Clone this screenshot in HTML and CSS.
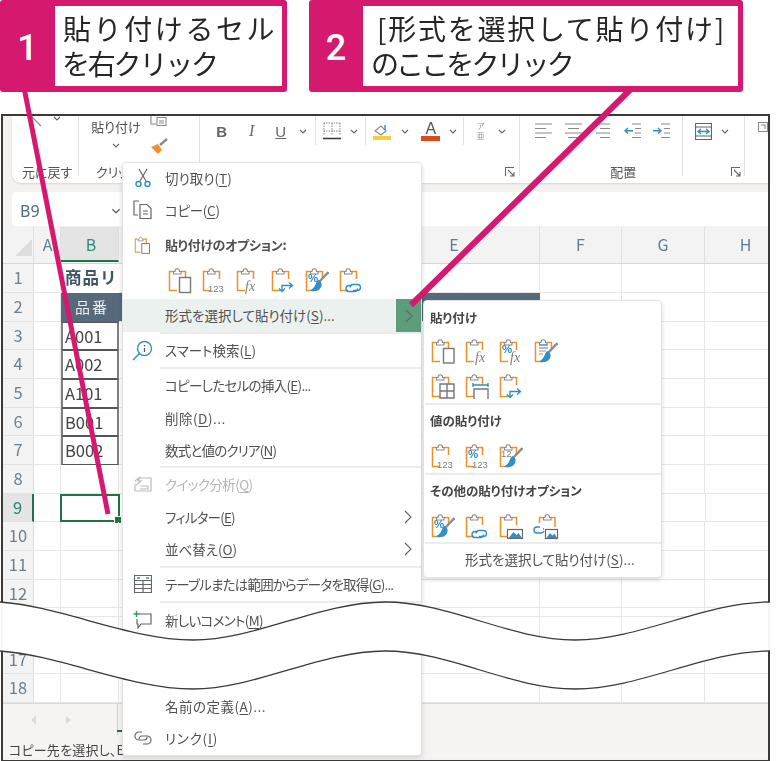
FILE: index.html
```html
<!DOCTYPE html>
<html lang="ja">
<head>
<meta charset="utf-8">
<title>形式を選択して貼り付け</title>
<link rel="stylesheet" href="styles.css">
</head>
<body>
<svg class="defs" width="0" height="0" aria-hidden="true">
  <symbol id="chev" viewBox="0 0 8 5"><path class="s-g" d="M1 1l3 3 3-3"/></symbol>
  <symbol id="more" viewBox="0 0 8 14"><path class="s-g" d="M1 1l6 6-6 6"/></symbol>
  <symbol id="launch" viewBox="0 0 10 10"><path class="s-g" d="M.5 9V.5H9M3 3l6 6M9 5v4H5"/></symbol>
  <symbol id="clip" viewBox="0 0 24 26">
    <path class="s-o" d="M5 4.500H1.500V23.500H9M13 4.500H17.500V12"/>
    <path class="s-c" d="M5.500 7V4.500H7C7 .8 11.500 .8 11.500 4.500H13V7Z"/>
  </symbol>
  <symbol id="brush" viewBox="0 0 24 26">
    <path class="s-stem" d="M23.500 5L14.500 14.500"/>
    <path class="f-b" d="M14 13C10 14 12 20 5 23.500C10 25.500 17.500 23.500 16.500 16Z"/>
  </symbol>
  <symbol id="chain" viewBox="0 0 24 26">
    <path class="s-b" d="M13 18.500h-3a3 3 0 0 0 0 6h5.500a3 3 0 0 0 3-3M14 23.500h4.500a3 3 0 0 0 0-6H14a3 3 0 0 0-3 3"/>
  </symbol>
  <symbol id="swap" viewBox="0 0 24 26">
    <path class="s-b" d="M8 21.500l3 3 3-3M11 24v-5.500h9.500M18 15.500l3.500 3-3.500 3"/>
  </symbol>
  <symbol id="pic" viewBox="0 0 24 26">
    <rect class="s-d" x="8.500" y="16.500" width="15" height="9"/>
    <path class="f-b" d="M9.500 25l5-6 3 3 2-2 3.500 5Z"/>
  </symbol>
</svg>

<div class="callouts">
  <div class="callout c1">
    <div class="num">1</div>
    <div class="say"><span class="l1">貼り付けるセル</span><span class="l2">を右クリック</span></div>
  </div>
  <div class="callout c2">
    <div class="num">2</div>
    <div class="say"><span class="l1 br">[形式を選択して貼り付け]</span><span class="l2">のここをクリック</span></div>
  </div>
</div>

<div class="excel">
  <div class="ribbon">
    <div class="grp g1">
      <div class="g1-top">
        <svg class="undo" width="12" height="11" viewBox="0 0 12 11"><path class="s-l" d="M1 0l10 10"/></svg>
        <svg class="ch" width="8" height="5"><use href="#chev"/></svg>
      </div>
      <div class="lab">元に戻す</div>
    </div>
    <div class="grp g2">
      <div class="g2-top">
        <div class="pastecol"><span class="ptxt">貼り付け</span><svg class="ch" width="8" height="5"><use href="#chev"/></svg></div>
        <div class="smallcol">
          <svg width="18" height="11" viewBox="0 0 18 11"><path class="s-l" d="M1 0v8h5M7 1.500h9v8H7zM9 5h5M9 7h5"/></svg>
          <svg width="19" height="17" viewBox="0 0 19 17"><path class="f-o" d="M1 9l7-3 4 6-4 4z"/><path class="s-stem" d="M10 7l7-6"/></svg>
        </div>
      </div>
      <div class="lab lab-clip">クリッ</div>
    </div>
    <div class="grp g3">
      <div class="tools">
        <span class="t w30 fb">B</span>
        <span class="t w30 fi">I</span>
        <span class="t w28 fu">U</span>
        <span class="t w16"><svg class="ch" width="8" height="5"><use href="#chev"/></svg></span>
        <span class="t w10"><i class="vsep"></i></span>
        <span class="t w22"><svg width="18" height="18" viewBox="0 0 18 18"><path class="s-dot" d="M.5 1h17M.5 9h17M1 1v12M9 1v12M17 1v12"/><path class="s-k" d="M0 16.500h18"/></svg></span>
        <span class="t w22"><svg class="ch" width="8" height="5"><use href="#chev"/></svg></span>
        <span class="t w2"><i class="vsep"></i></span>
        <span class="t w30"><svg width="18" height="17" viewBox="0 0 18 17"><path class="s-l" d="M2 8l6-5 5 5-5 4z"/><path class="s-b" d="M12 7V2"/><rect class="f-y" y="13" width="18" height="4"/></svg></span>
        <span class="t w16"><svg class="ch" width="8" height="5"><use href="#chev"/></svg></span>
        <span class="t w36 col-a"><span class="aa">A</span><i class="redbar"></i></span>
        <span class="t w8"><svg class="ch" width="8" height="5"><use href="#chev"/></svg></span>
        <span class="t w14"><i class="vsep"></i></span>
        <span class="t w20"><span class="phon">ア<br>亜</span></span>
        <span class="t w22"><svg class="ch" width="8" height="5"><use href="#chev"/></svg></span>
      </div>
      <div class="lab lab-end"><svg width="10" height="10"><use href="#launch"/></svg></div>
    </div>
    <div class="grp g4">
      <div class="tools">
        <span class="t w30"><svg width="17" height="16" viewBox="0 0 17 16"><path class="s-l" d="M0 1h17M0 5.500h11M0 10h17M0 14.500h11"/></svg></span>
        <span class="t w30"><svg width="17" height="16" viewBox="0 0 17 16"><path class="s-l" d="M0 1h17M3 5.500h11M0 10h17M3 14.500h11"/></svg></span>
        <span class="t w30"><svg width="14" height="16" viewBox="0 0 14 16"><path class="s-l" d="M0 1h14M4 5.500h10M0 10h14M4 14.500h10"/></svg></span>
        <span class="t w28"><svg width="17" height="16" viewBox="0 0 17 16"><path class="s-l" d="M8 1h9M11 5.500h6M11 10h6M8 14.500h9"/><path class="s-b" d="M9 7.700H1M4 5L1 7.700l3 2.800"/></svg></span>
        <span class="t w30"><svg width="17" height="16" viewBox="0 0 17 16"><path class="s-l" d="M8 1h9M11 5.500h6M11 10h6M8 14.500h9"/><path class="s-b" d="M0 7.700h8M5 5l3 2.700-3 2.800"/></svg></span>
        <span class="t w12"><i class="vsep tall"></i></span>
        <span class="t w30"><svg width="17" height="17" viewBox="0 0 17 17"><path class="s-d" d="M.5.500h16v16H.5zM.500 4h16M.500 13h16"/><path class="s-b" d="M3 8.500h11M6 6L3 8.500 6 11M11 6l3 2.500-3 2.500"/></svg></span>
        <span class="t w14"><svg class="ch" width="8" height="5"><use href="#chev"/></svg></span>
      </div>
      <div class="lab lab-mid">配置<svg class="launch-r" width="10" height="10"><use href="#launch"/></svg></div>
    </div>
    <div class="grp g5">
      <svg class="edge" width="10" height="10" viewBox="0 0 10 10"><path class="s-l" d="M.5.500h9v9h-9zM3 3h4v4"/></svg>
    </div>
  </div>

  <div class="formula">
    <div class="namebox"><span>B9</span><svg width="10" height="6" viewBox="0 0 8 5"><use href="#chev"/></svg></div>
    <div class="fx-input"></div>
  </div>

  <div class="sheet">
    <div class="colhead">
      <div class="corner"><i class="tri"></i></div>
      <div class="ch-a">A</div>
      <div class="ch-b">B</div>
      <div class="ch-c"></div>
      <div class="ch-d"></div>
      <div class="ch-e">E</div>
      <div class="ch-f">F</div>
      <div class="ch-g">G</div>
      <div class="ch-h">H</div>
    </div>
    <div class="row"><div class="rh">1</div><div class="ca"></div><div class="cb title">商品リ</div><div class="rest"></div></div>
    <div class="row"><div class="rh">2</div><div class="ca"></div><div class="cb thead">品番</div><div class="rest"><i class="band"></i></div></div>
    <div class="row"><div class="rh">3</div><div class="ca"></div><div class="cb td">A001</div><div class="rest"></div></div>
    <div class="row"><div class="rh">4</div><div class="ca"></div><div class="cb td">A002</div><div class="rest"></div></div>
    <div class="row"><div class="rh">5</div><div class="ca"></div><div class="cb td">A101</div><div class="rest"></div></div>
    <div class="row"><div class="rh">6</div><div class="ca"></div><div class="cb td">B001</div><div class="rest"></div></div>
    <div class="row"><div class="rh">7</div><div class="ca"></div><div class="cb td">B002</div><div class="rest"></div></div>
    <div class="row"><div class="rh">8</div><div class="ca"></div><div class="cb"></div><div class="rest"></div></div>
    <div class="row"><div class="rh rh-on">9</div><div class="ca"></div><div class="cb sel"></div><div class="rest"></div></div>
    <div class="row"><div class="rh">10</div><div class="ca"></div><div class="cb"></div><div class="rest"></div></div>
    <div class="row"><div class="rh">11</div><div class="ca"></div><div class="cb"></div><div class="rest"></div></div>
    <div class="row"><div class="rh">12</div><div class="ca"></div><div class="cb"></div><div class="rest"></div></div>
    <div class="row short"><div class="rh"></div><div class="ca"></div><div class="cb"></div><div class="rest"></div></div>
    <div class="row"><div class="rh"></div><div class="ca"></div><div class="cb"></div><div class="rest"></div></div>
    <div class="row"><div class="rh">17</div><div class="ca"></div><div class="cb"></div><div class="rest"></div></div>
    <div class="row"><div class="rh">18</div><div class="ca"></div><div class="cb"></div><div class="rest"></div></div>
  </div>

  <div class="tabs">
    <svg width="42" height="10" viewBox="0 0 42 10"><path class="f-lg" d="M6 1L1 5l5 4zM36 1l5 4-5 4z"/></svg>
    <i class="tabline"></i>
    <i class="tabgreen"></i>
  </div>
  <div class="status">コピー先を選択し、E</div>
</div>

<div class="menu">
  <div class="mi h32"><span class="ic"><svg width="16" height="20" viewBox="0 0 16 20"><path class="s-d" d="M4 1l7 12M12 1L5 13"/><circle class="s-b" cx="3.500" cy="16" r="2.500"/><circle class="s-b" cx="12.500" cy="16" r="2.500"/></svg></span>切り取り(<u>T</u>)</div>
  <div class="mi h32 k-3"><span class="ic"><svg width="19" height="19" viewBox="0 0 19 19"><path class="s-d" d="M6 1H1v14h4M7 4.500h7l4 4v10H7zM10 11h5M10 14h5"/></svg></span>コピー(<u>C</u>)</div>
  <div class="mi mh h38 k-3"><span class="ic"><svg width="17" height="18" viewBox="0 0 24 26"><use href="#clip"/><rect class="s-d" x="11" y="11" width="11" height="14"/></svg></span>貼り付けのオプション:</div>
  <div class="pastes p-main">
    <svg class="pi" viewBox="0 0 24 26"><use href="#clip"/><rect class="s-d2" x="11.500" y="10.500" width="11" height="15"/></svg>
    <svg class="pi" viewBox="0 0 24 26"><use href="#clip"/><text class="t123" x="6" y="25">123</text></svg>
    <svg class="pi" viewBox="0 0 24 26"><use href="#clip"/><text class="tfx" x="9" y="24">fx</text></svg>
    <svg class="pi" viewBox="0 0 24 26"><use href="#clip"/><use href="#swap" width="24" height="26"/></svg>
    <svg class="pi" viewBox="0 0 24 26"><use href="#clip"/><text class="tpc" x="3" y="15">%</text><use href="#brush" width="24" height="26"/></svg>
    <svg class="pi" viewBox="0 0 24 26"><use href="#clip"/><use href="#chain" width="24" height="26"/></svg>
  </div>
  <div class="mi hot"><span class="hot-t"><span class="ic"></span>形式を選択して貼り付け(<u>S</u>)...</span><span class="hot-a"><svg width="8" height="14"><use href="#more"/></svg></span></div>
  <i class="sep s1"></i>
  <div class="mi h33"><span class="ic"><svg width="21" height="21" viewBox="0 0 21 21"><circle class="s-b" cx="12.500" cy="8.500" r="7"/><path class="s-b" d="M7.500 13.500L1 20"/><path class="s-k1" d="M12.500 8v4M12.500 5v1.500"/></svg></span>スマート検索(<u>L</u>)</div>
  <i class="sep s1"></i>
  <div class="mi h33 k-7"><span class="ic"></span>コピーしたセルの挿入(<u>E</u>)...</div>
  <div class="mi h32 k5"><span class="ic"></span>削除(<u>D</u>)...</div>
  <div class="mi h32 k-8"><span class="ic"></span>数式と値のクリア(<u>N</u>)</div>
  <i class="sep s1"></i>
  <div class="mi h33 off k-6"><span class="ic"><svg width="18" height="18" viewBox="0 0 18 18"><path class="s-lg" d="M6 3h11v13H1V9M1 6l5-4-2 4 3 0-5 4M6 11h8v3H6"/></svg></span>クイック分析(<u>Q</u>)</div>
  <div class="mi h32 k-8"><span class="ic"></span>フィルター(<u>E</u>)<svg class="arrow" width="8" height="14"><use href="#more"/></svg></div>
  <div class="mi h33"><span class="ic"></span>並べ替え(<u>O</u>)<svg class="arrow" width="8" height="14"><use href="#more"/></svg></div>
  <i class="sep s1"></i>
  <div class="mi h33 k-8"><span class="ic"><svg width="18" height="18" viewBox="0 0 18 18"><path class="s-d" d="M.5.500h17v17H.5zM.5 5.500h17M.5 9.500h17M.5 13.500h17M9 5.500v12"/><path class="s-b" d="M3 3h3M12 3h3"/></svg></span>テーブルまたは範囲からデータを取得(<u>G</u>)...</div>
  <i class="sep s1"></i>
  <div class="mi h34 k-7"><span class="ic"><svg width="19" height="18" viewBox="0 0 19 18"><path class="s-d" d="M6 3h12v10H8l-3 4v-4H4V8"/><path class="s-gr" d="M3.500 0v6M.5 3h6"/></svg></span>新しいコメント(<u>M</u>)</div>
  <div class="gap53"></div>
  <div class="mi h32 k5"><span class="ic"></span>名前の定義(<u>A</u>)...</div>
  <div class="mi h32 k8"><span class="ic"><svg width="18" height="14" viewBox="0 0 18 14"><path class="s-d" d="M8 1H5a4 4 0 0 0 0 8h5a3 3 0 0 0 3-3M9 13h4a4 4 0 0 0 0-8H8a3 3 0 0 0-3 3"/></svg></span>リンク(<u>I</u>)</div>
</div>

<div class="submenu">
  <div class="st t34">貼り付け</div>
  <div class="pastes p-a">
    <svg class="pi" viewBox="0 0 24 26"><use href="#clip"/><rect class="s-d2" x="12.500" y="10.500" width="10.500" height="14.500"/></svg>
    <svg class="pi" viewBox="0 0 24 26"><use href="#clip"/><text class="tfx" x="10" y="24">fx</text></svg>
    <svg class="pi" viewBox="0 0 24 26"><use href="#clip"/><text class="tpc" x="3" y="15">%</text><text class="tfx" x="11" y="24">fx</text></svg>
    <svg class="pi" viewBox="0 0 24 26"><use href="#clip"/><path class="s-lines" d="M5 7h9M5 10h9"/><path class="s-red" d="M5 13h7M5 16h4"/><use href="#brush" width="24" height="26"/></svg>
    <svg class="pi" viewBox="0 0 24 26"><use href="#clip"/><path class="s-d2" d="M9 11h14v14H9zM16 11v14M9 18h14"/></svg>
    <svg class="pi" viewBox="0 0 24 26"><use href="#clip"/><path class="s-b" d="M8 12h15M8 10v4M23 10v4"/><path class="s-d2" d="M9 26V16h14v10"/></svg>
    <svg class="pi" viewBox="0 0 24 26"><use href="#clip"/><use href="#swap" width="24" height="26"/></svg>
  </div>
  <i class="sep s2 m1"></i>
  <div class="st t33">値の貼り付け</div>
  <div class="pastes p-b">
    <svg class="pi" viewBox="0 0 24 26"><use href="#clip"/><text class="t123" x="6" y="25">123</text></svg>
    <svg class="pi" viewBox="0 0 24 26"><use href="#clip"/><text class="tpc" x="3" y="15">%</text><text class="t123" x="7" y="25">123</text></svg>
    <svg class="pi" viewBox="0 0 24 26"><use href="#clip"/><text class="t123" x="2" y="14">12</text><use href="#brush" width="24" height="26"/></svg>
  </div>
  <i class="sep s2 m1"></i>
  <div class="st t33">その他の貼り付けオプション</div>
  <div class="pastes p-b">
    <svg class="pi" viewBox="0 0 24 26"><use href="#clip"/><text class="tpc" x="3" y="15">%</text><use href="#brush" width="24" height="26"/></svg>
    <svg class="pi" viewBox="0 0 24 26"><use href="#clip"/><use href="#chain" width="24" height="26"/></svg>
    <svg class="pi" viewBox="0 0 24 26"><use href="#clip"/><use href="#pic" width="24" height="26"/></svg>
    <svg class="pi" viewBox="0 0 24 26"><path class="s-o" d="M9 4.500H5.500V10M17 4.500H21V14"/><path class="s-c" d="M9.500 7V4.500H11C11 .8 15.500 .8 15.500 4.500H17V7Z"/><path class="s-b" d="M6 14H3a3 3 0 0 0 0 6h4a3 3 0 0 0 3-2M9 16h1"/><rect class="s-d" x="11.500" y="16.500" width="12" height="9"/><path class="f-b" d="M12.500 25l3.500-5 2.500 2.500 2-2 2.500 4.500Z"/></svg>
  </div>
  <i class="sep s2 m2"></i>
  <div class="sub-item">形式を選択して貼り付け(<u>S</u>)...</div>
</div>

<svg class="cut" width="783" height="761" viewBox="0 0 783 761" aria-hidden="true">
  <path class="cut-fill" d="M0 602C60 606 130 640 193 640S320 602 385 602 510 640 575 640 705 602 771 602V651C705 651 640 689 575 689S450 651 385 651 256 689 193 689 60 655 0 651Z"/>
  <path class="cut-line" d="M0 602C60 606 130 640 193 640S320 602 385 602 510 640 575 640 705 602 770 602"/>
  <path class="cut-line" d="M0 651C60 655 130 689 193 689S320 651 385 651 510 689 575 689 705 651 770 651"/>
</svg>

<svg class="leaders" width="783" height="761" viewBox="0 0 783 761" aria-hidden="true">
  <path class="leader l-a" d="M24.500 90L108 514"/>
  <path class="leader l-b" d="M631 89L411 305"/>
</svg>
</body>
</html>
```
FILE: styles.css
```css
* { box-sizing: border-box; }
html, body { margin: 0; padding: 0; }
body {
  position: relative;
  width: 783px;
  height: 761px;
  overflow: hidden;
  background: #fff;
  color: #505050;
  font-family: "Noto Sans CJK JP", "Noto Sans", sans-serif;
  font-feature-settings: "palt";
}
i { display: block; font-style: normal; }
u { text-underline-offset: 2px; }
.defs { position: absolute; }

/* svg paint classes */
svg path, svg rect, svg circle { fill: none; }
.s-g { stroke: #666; stroke-width: 1.1; fill: none; }
.s-o { stroke: #e8912d; stroke-width: 1.5; fill: none; }
.s-c { stroke: #8a8a8a; stroke-width: 1.1; fill: #fff; }
svg .s-stem { stroke: #8b8b8b; stroke-width: 2.4; fill: none; }
svg .f-b { fill: #2f8fc6; }
svg .f-o { fill: #ee8f33; }
svg .f-y { fill: #f2d235; }
svg .f-lg { fill: #d9d9d9; }
.s-b { stroke: #2f8fc6; stroke-width: 1.4; fill: none; }
.s-d { stroke: #666; stroke-width: 1.2; fill: none; }
.s-d2 { stroke: #777; stroke-width: 1.4; fill: #fff; }
svg .s-d2 { fill: #fff; }
.s-l { stroke: #8a8a8a; stroke-width: 1.1; fill: none; }
.s-lg { stroke: #bcbcbc; stroke-width: 1.2; fill: none; }
.s-k { stroke: #333; stroke-width: 1.5; }
.s-k1 { stroke: #555; stroke-width: 1.3; }
.s-gr { stroke: #2f9a63; stroke-width: 1.4; }
.s-dot { stroke: #888; stroke-width: 1; stroke-dasharray: 1.5 1; }
.s-lines { stroke: #2f8fc6; stroke-width: 1.2; }
.s-red { stroke: #e77; stroke-width: 1.2; }
.t123 { font: 9.5px "Liberation Sans", sans-serif; fill: #7d7d7d; }
.tfx { font: italic 14px "Liberation Serif", serif; fill: #7d7d7d; }
.tpc { font: 700 11.5px "Liberation Sans", sans-serif; fill: #2f8fc6; }

/* callouts */
.callouts { display: flex; gap: 22px; height: 92px; }
.callout {
  display: flex;
  height: 92px;
  padding: 6px 5px 6px 0;
  background: #d5196f;
  border-radius: 3px;
}
.c1 { width: 287px; }
.c2 { width: 434px; }
.num {
  width: 54px;
  padding-top: 4px;
  display: flex;
  align-items: center;
  justify-content: center;
  color: #fff;
  font: 500 36px Roboto, sans-serif;
}
.c1 .num { width: 55px; }
.say {
  flex: 1;
  display: flex;
  flex-direction: column;
  justify-content: center;
  padding-left: 9px;
  background: #fff;
  color: #262626;
  font-size: 28px;
  line-height: 35px;
  font-feature-settings: normal;
  filter: blur(.3px);
}
.say .l1 { letter-spacing: 2.600px; white-space: nowrap; margin-left: -1px; }
.say .l1.br { letter-spacing: 1.750px; margin-left: 5px; }
.say .l2 { letter-spacing: -2.200px; white-space: nowrap; margin-left: -2px; }
.c2 .say .l2 { letter-spacing: -2.900px; margin-left: -1px; }

/* window */
.excel {
  margin: 22px 0 0 1px;
  width: 769px;
  height: 647px;
  border: 2px solid #3d3936;
  border-bottom-width: 1px;
  background: #f3f2f1;
  filter: blur(.35px);
}
.ribbon {
  display: flex;
  height: 67px;
  margin-left: 9px;
  background: #fff;
  border-radius: 0 0 0 9px;
  box-shadow: 0 1px 2px rgba(0, 0, 0, .12);
}
.grp {
  height: 60px;
  display: flex;
  flex-direction: column;
  justify-content: space-between;
  border-right: 1px solid #e2e2e2;
}
.g1 { width: 67px; }
.g2 { width: 121px; }
.g3 { width: 321px; }
.g4 { width: 225px; }
.g5 { flex: 1; border: 0; padding: 6px 0 0 13px; }
.lab { font-size: 13px; line-height: 16px; color: #555; white-space: nowrap; margin-bottom: -4px; }
.g1 .lab { padding-left: 10px; }
.g1-top { height: 14px; display: flex; align-items: flex-start; padding-left: 18px; gap: 11px; }
.g2-top { display: flex; height: 44px; }
.pastecol { width: 71px; display: flex; flex-direction: column; align-items: center; gap: 8px; padding: 2px 0 0 3px; }
.ptxt { font-size: 13px; line-height: 17px; }
.smallcol { display: flex; flex-direction: column; gap: 11px; }
.lab-clip { padding-left: 17px; }
.lab-end { display: flex; justify-content: flex-end; padding: 0 4px 3px 0; }
.lab-mid { position: relative; text-align: center; padding-right: 18px; }
.launch-r { position: absolute; right: 3px; top: 3px; }
.tools { display: flex; height: 30px; align-items: center; padding-left: 7px; }
.g4 .tools { padding-left: 8px; }
.t { display: flex; align-items: center; justify-content: center; height: 30px; flex: none; }
.w2 { width: 2px; } .w8 { width: 8px; } .w10 { width: 10px; } .w12 { width: 12px; }
.w14 { width: 14px; } .w16 { width: 16px; } .w20 { width: 20px; } .w22 { width: 22px; }
.w28 { width: 28px; } .w30 { width: 30px; } .w36 { width: 36px; }
.fb, .fi, .fu { font: 700 15px "Liberation Sans", sans-serif; color: #666; }
.fi { font-style: italic; font-weight: 400; font-family: "Liberation Serif", serif; font-size: 16px; }
.fu { font-weight: 400; text-decoration: underline; }
.vsep { width: 1px; height: 28px; background: #e2e2e2; }
.tall { height: 60px; align-self: flex-start; }
.col-a { flex-direction: column; }
.aa { font: 400 16px/15px "Liberation Sans", sans-serif; color: #555; }
.redbar { width: 19px; height: 5px; background: #db4a1b; }
.phon { font-size: 8px; line-height: 10px; color: #999; text-align: center; }

.formula { display: flex; height: 35px; margin-top: 9px; padding-left: 9px; gap: 2px; }
.namebox {
  width: 112px;
  height: 34px;
  display: flex;
  align-items: center;
  justify-content: space-between;
  padding: 4px 3px 0 8px;
  background: #fff;
  border-radius: 4px;
  font: 16px "Noto Sans", sans-serif;
  color: #4f6a80;
}
.fx-input { flex: 1; height: 34px; background: #fff; }

/* sheet */
.sheet { background: #fff; }
.colhead {
  display: flex;
  height: 37.330px;
  background: #f3f3f3;
  border-bottom: 1px solid #d6d6d6;
  font-size: 16px;
  line-height: 35px;
  color: #5f7d92;
  text-align: center;
}
.colhead > div { border-right: 1px solid #e0e0e0; flex: none; }
.corner { width: 31px; padding: 12px 0 0 12px; }
.tri { width: 0; height: 0; border-style: solid; border-width: 0 0 17px 17px; border-color: transparent transparent #dedede transparent; }
.ch-a { width: 27px; padding-left: 1px; }
.ch-b { width: 58px; padding-left: 3px; background: #e4e4e4; border-bottom: 2px solid #217346; height: 35px; color: #2f8a80; }
.ch-c { width: 125px; }
.ch-d { width: 124px; }
.ch-e { width: 172px; padding-left: 1px; }
.ch-f { width: 82px; }
.ch-g { width: 83px; }
.colhead .ch-h { flex: 1; border: 0; padding-left: 18px; }
.row { display: flex; height: 28.670px; font-size: 16.500px; line-height: 27px; color: #444; }
.row.short { height: 8.700px; }
.rh {
  width: 31px;
  flex: none;
  background: #f3f3f3;
  border-right: 1px solid #dcdcdc;
  border-bottom: 1px solid #e2e2e2;
  text-align: center;
  color: #6d7f8c;
}
.rh-on { background: #e4e4e4; border-right: 2px solid #217346; color: #2f7d70; }
.ca, .cb { flex: none; border-right: 1px solid #e6e6e6; border-bottom: 1px solid #e6e6e6; }
.ca { width: 27px; }
.cb { width: 58px; padding-left: 4px; white-space: nowrap; position: relative; }
.title { font-weight: 700; color: #3f5568; letter-spacing: 1px; padding-left: 4px; border: 0; font-feature-settings: normal; }
.thead { background: #566a7c; color: #eee; text-align: center; letter-spacing: 2px; font-size: 15px; border: 0; }
.td { border: 1px solid #444; border-width: 1px 2px 1px 2px; border-color: #555 #808080; padding-left: 2px; line-height: 26px; }
.sel { margin-left: -1px; width: 60px; border: 2px solid #217346; }
.sel::after {
  content: "";
  position: absolute;
  right: -4px;
  bottom: -4px;
  width: 6px;
  height: 6px;
  background: #217346;
  border: 1px solid #fff;
}
.rest {
  flex: 1;
  border-bottom: 1px solid #e6e6e6;
  background-image: linear-gradient(#e6e6e6, #e6e6e6), linear-gradient(#e6e6e6, #e6e6e6), linear-gradient(#e6e6e6, #e6e6e6);
  background-size: 1px 100%;
  background-repeat: no-repeat;
  background-position: 420px 0, 502px 0, 585px 0;
}
.band { width: 421px; height: 28px; background: #566a7c; }

.tabs {
  position: relative;
  height: 38px;
  padding: 11px 0 0 27px;
  background: #f5f4f3;
  border-top: 1px solid #d9d9d9;
}
.tabs svg { display: block; }
.tabline { position: absolute; left: 114px; top: 0; width: 1px; height: 31px; background: #ccc; }
.tabgreen { position: absolute; left: 114px; top: 26px; width: 6px; height: 2px; background: #217346; }
.status { height: 17px; padding: 1px 0 0 6px; background: #f5f4f3; font-size: 13px; line-height: 15px; letter-spacing: .2px; color: #444; white-space: nowrap; }

/* context menus */
.menu, .submenu {
  position: absolute;
  background: #fff;
  border: 1px solid #e3e3e3;
  border-radius: 4px;
  box-shadow: 0 2px 5px rgba(0, 0, 0, .14);
  font-size: 13.500px;
  filter: blur(.3px);
}
.menu { left: 122px; top: 162px; width: 300px; height: 594px; }
.menu > .mi:first-child { margin-top: -1px; }
.submenu { left: 423px; top: 300px; width: 239px; height: 278px; }
.mi { display: flex; align-items: center; white-space: nowrap; padding-bottom: 1px; }
.ic { width: 42px; flex: none; display: flex; justify-content: center; padding-right: 3px; }
.h32 { height: 32px; }
.h33 { height: 33px; }
.h34 { height: 34px; }
.h38 { height: 38px; }
.k-3 { letter-spacing: -.3px; }
.k-6 { letter-spacing: -.6px; }
.k-7 { letter-spacing: -.7px; }
.k-8 { letter-spacing: -.8px; }
.k5 { letter-spacing: .5px; }
.k8 { letter-spacing: .8px; }
.mh { font-weight: 700; font-size: 13px; }
.off { color: #b4b4b4; }
.arrow { margin-left: auto; margin-right: 9px; }
.hot { height: 33px; padding-bottom: 0; }
.hot-t { flex: 1; height: 33px; display: flex; align-items: center; padding-bottom: 1px; background: #ebf1ef; }
.hot-a { width: 25px; height: 33px; display: flex; align-items: center; justify-content: center; background: #5c9e7b; }
.sep { height: 2px; background: #ececec; }
.s1 { margin-left: 37px; }
.s2 { margin-left: 1px; }
.m1 { margin-top: 4px; }
.m2 { margin-top: 3px; }
.gap53 { height: 53px; }
.pastes { display: flex; flex-wrap: wrap; gap: 9px 10.200px; }
.pi { width: 24px; height: 26px; flex: none; overflow: visible; }
.p-main { height: 35px; padding: 3px 0 0 45px; }
.p-a { padding: 3px 0 0 7px; width: 160px; }
.p-b { padding: 5px 0 0 7px; }
.st { padding: 0 0 2px 6px; font-weight: 700; font-size: 12.500px; display: flex; align-items: center; color: #444; }
.t34 { height: 34px; }
.t33 { height: 33px; }
.sub-item { height: 33px; display: flex; align-items: center; padding: 0 0 3px 41px; }

/* overlays */
.cut, .leaders { position: absolute; left: 0; top: 0; }
.cut path.cut-fill { fill: #fff; fill-opacity: .95; }
.cut path.cut-line { fill: none; stroke: #3d3936; stroke-width: 1.300; }
.leaders path.leader { fill: none; stroke: #d5196f; }
.l-a { stroke-width: 5; }
.l-b { stroke-width: 6; }
```
